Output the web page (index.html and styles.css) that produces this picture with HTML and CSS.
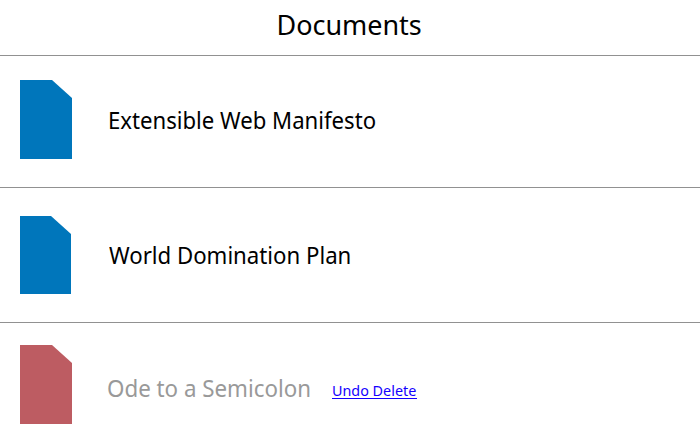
FILE: index.html
```html
<!DOCTYPE html>
<html lang="en">
<head>
<meta charset="utf-8">
<title>Documents</title>
<link rel="stylesheet" href="styles.css">
</head>
<body>
<header class="header"><h1 class="heading">Documents</h1></header>
<ul class="documents">
  <li class="document">
    <svg class="icon" width="52" height="79" viewBox="0 0 52 79"><path d="M0 0H32L52 18V79H0Z"/></svg>
    <span class="title title-manifesto">Extensible Web Manifesto</span>
  </li>
  <li class="document document-plan">
    <svg class="icon" width="51" height="78" viewBox="0 0 51 78"><path d="M0 0H31L51 18V78H0Z"/></svg>
    <span class="title title-plan">World Domination Plan</span>
  </li>
  <li class="document document-deleted">
    <svg class="icon" width="52" height="79" viewBox="0 0 52 79"><path d="M0 0H32L52 18V79H0Z"/></svg>
    <span class="title title-ode">Ode to a Semicolon</span>
    <a class="undo" href="#"><span class="undo-label">Undo Delete</span></a>
  </li>
</ul>
</body>
</html>
```
FILE: styles.css
```css
* { box-sizing: border-box; }
body {
  margin: 0;
  height: 446px;
  overflow: hidden;
  background: #fff;
  color: #000;
  font-family: "Noto Sans", "Open Sans", sans-serif;
}
.header {
  height: 56px;
  padding-top: 5px;
  border-bottom: 1px solid #919191;
  display: flex;
  justify-content: center;
}
.heading {
  margin: 0 2px 0 0;
  font-size: 27.5px;
  font-weight: 400;
  line-height: 40px;
  white-space: nowrap;
  transform: scaleX(.98);
}
.documents { margin: 0; padding: 0; list-style: none; }
.document {
  display: flex;
  align-items: flex-start;
  height: 132px;
  padding: 24px 20px 0;
  border-bottom: 1px solid #919191;
}
.document-plan { height: 135px; padding-top: 28px; }
.document-deleted { height: 123px; padding-top: 22px; border-bottom: 0; }
.icon { display: block; flex: none; fill: #0076bb; }
.document-deleted .icon { fill: #bd5c62; }
.title {
  width: 270px;
  margin: 22px 0 0 36px;
  font-size: 23.5px;
  line-height: 36px;
  white-space: nowrap;
  transform-origin: left;
}
.title-manifesto { transform: scaleX(.942); }
.title-plan { margin: 21px 0 0 38px; transform: scaleX(.945); }
.title-ode { width: 224px; margin: 25px 0 0 35px; transform: scaleX(.95); color: #999; }
.undo {
  width: 85px;
  height: 18px;
  margin: 36px 0 0 1px;
  border-bottom: 1px solid #1400ff;
  color: #1400ff;
  font-size: 14.5px;
  line-height: 19px;
  text-decoration: none;
  white-space: nowrap;
}
.undo-label { display: inline-block; transform: scaleX(.99); transform-origin: left; }
```
